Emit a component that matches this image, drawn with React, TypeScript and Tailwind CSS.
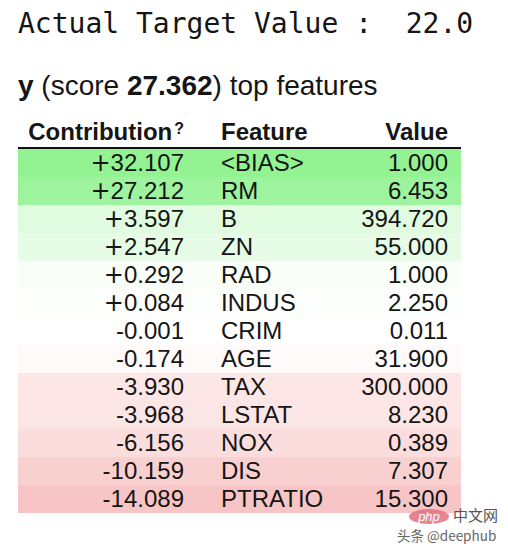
import React from "react";

type Row = { c: string; f: string; v: string; bg: string };

const rows: Row[] = [
  { c: "+32.107", f: "<BIAS>", v: "1.000", bg: "bg-[#93f393]" },
  { c: "+27.212", f: "RM", v: "6.453", bg: "bg-[#9ef39e]" },
  { c: "+3.597", f: "B", v: "394.720", bg: "bg-[#e0fbe0]" },
  { c: "+2.547", f: "ZN", v: "55.000", bg: "bg-[#e6fce6]" },
  { c: "+0.292", f: "RAD", v: "1.000", bg: "bg-[#f9fef9]" },
  { c: "+0.084", f: "INDUS", v: "2.250", bg: "bg-[#fcfefc]" },
  { c: "-0.001", f: "CRIM", v: "0.011", bg: "bg-[#ffffff]" },
  { c: "-0.174", f: "AGE", v: "31.900", bg: "bg-[#fefafa]" },
  { c: "-3.930", f: "TAX", v: "300.000", bg: "bg-[#fce6e6]" },
  { c: "-3.968", f: "LSTAT", v: "8.230", bg: "bg-[#fce5e5]" },
  { c: "-6.156", f: "NOX", v: "0.389", bg: "bg-[#fbdddd]" },
  { c: "-10.159", f: "DIS", v: "7.307", bg: "bg-[#f9d0d0]" },
  { c: "-14.089", f: "PTRATIO", v: "15.300", bg: "bg-[#f7c5c5]" },
];

function Contribution({ c }: { c: string }) {
  if (c.startsWith("+")) {
    return (
      <>
        <span className="font-['DejaVu_Sans',sans-serif]">+</span>
        {c.slice(1)}
      </>
    );
  }
  return <>{c}</>;
}

export default function App() {
  return (
    <div className="relative w-[508px] h-[548px] bg-white text-[#151515] overflow-hidden">
      <div className="pl-[18px] pt-[8px]">
        <div className="font-['DejaVu_Sans_Mono',monospace] text-[28px] leading-[32px] whitespace-pre">
          Actual Target Value :  22.0
        </div>
        <div className="mt-[30px] font-['Liberation_Sans',Arial,sans-serif] text-[28px] leading-[32px]">
          <b>y</b> (score <b>27.362</b>) top features
        </div>
        <div className="mt-[16px] w-[443px] font-['Liberation_Sans',Arial,sans-serif] text-[24px]">
          <div className="flex h-[31px] items-end pb-[3px] border-b-2 border-[#111] font-bold leading-none">
            <div className="w-[166px] text-right">
              Contribution
              <span className="text-[16px] align-[6px] ml-[2px]">?</span>
            </div>
            <div className="ml-[37px] flex-1">Feature</div>
            <div className="pr-[13px] text-right">Value</div>
          </div>
          {rows.map((r) => (
            <div key={r.f} className={`flex h-[28px] items-center leading-none ${r.bg}`}>
              <div className="w-[166px] text-right">
                <Contribution c={r.c} />
              </div>
              <div className="ml-[37px] flex-1">{r.f}</div>
              <div className="pr-[13px] text-right">{r.v}</div>
            </div>
          ))}
        </div>
      </div>
      <div className="absolute left-[409px] top-[509px] h-[15px] w-[40px] rounded-[50%] bg-[#e5707f] opacity-85 flex items-center justify-center">
        <span className="font-['Liberation_Sans',Arial,sans-serif] italic text-[13px] leading-none text-white">php</span>
      </div>
      <div className="absolute left-[453px] top-[507px] font-['Noto_Sans_CJK_SC',sans-serif] text-[15px] leading-[15px] text-[#555]">
        中文网
      </div>
      <div className="absolute left-[397px] top-[528px] font-['Noto_Sans_CJK_SC',sans-serif] text-[13.5px] leading-[14px] text-[#666]">
        头条 @deephub
      </div>
    </div>
  );
}
